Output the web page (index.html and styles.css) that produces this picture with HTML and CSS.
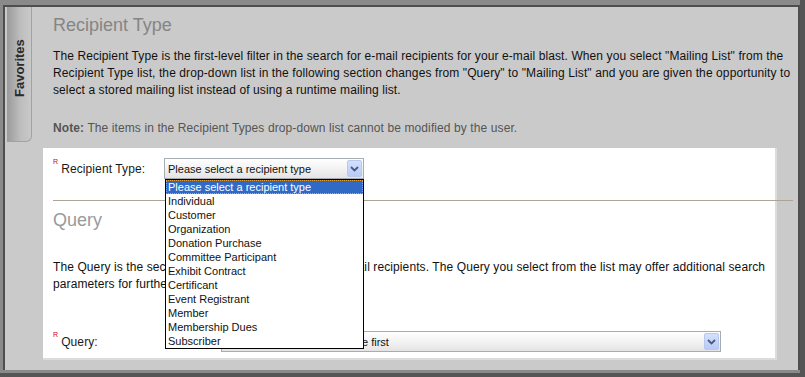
FILE: index.html
```html
<!DOCTYPE html>
<html lang="en">
<head>
    <meta charset="UTF-8">
    <title>Recipient Type</title>
    <link rel="stylesheet" href="styles.css">
</head>
<body>
    <div class="window">
        <div class="panel">
            <div class="tab"><span>Favorites</span></div>

            <div class="content">
                <h2 class="section-title">Recipient Type</h2>
                <p class="help">The Recipient Type is the first-level filter in the search for e-mail recipients for your e-mail blast. When you select "Mailing List" from the Recipient Type list, the drop-down list in the following section changes from "Query" to "Mailing List" and you are given the opportunity to select a stored mailing list instead of using a runtime mailing list.</p>
                <p class="help note"><b>Note:</b> The items in the Recipient Types drop-down list cannot be modified by the user.</p>

                <div class="form-box">
                    <div class="field-row">
                        <label class="field-label"><sup class="req">R</sup>Recipient Type:</label>
                        <div class="select-wrap type-select">
                            <div class="select-box">
                                <span>Please select a recipient type</span>
                                <span class="select-btn"><svg width="9" height="6" viewBox="0 0 9 6"><path d="M1 1 L4.5 4.5 L8 1" fill="none" stroke="#4a5a7e" stroke-width="1.8"/></svg></span>
                            </div>
                            <ul class="dropdown">
                                <li class="selected">Please select a recipient type</li>
                                <li>Individual</li>
                                <li>Customer</li>
                                <li>Organization</li>
                                <li>Donation Purchase</li>
                                <li>Committee Participant</li>
                                <li>Exhibit Contract</li>
                                <li>Certificant</li>
                                <li>Event Registrant</li>
                                <li>Member</li>
                                <li>Membership Dues</li>
                                <li>Subscriber</li>
                            </ul>
                        </div>
                    </div>

                    <hr class="divider">

                    <h2 class="section-title query-title">Query</h2>
                    <p class="help">The Query is the second-level filter in the search for e-mail recipients. The Query you select from the list may offer additional search parameters for further refining the list of recipients.</p>

                    <div class="field-row query-row">
                        <label class="field-label"><sup class="req">R</sup>Query:</label>
                        <div class="select-wrap query-select">
                            <div class="select-box">
                                <span>Please select a recipient type first</span>
                                <span class="select-btn"><svg width="9" height="6" viewBox="0 0 9 6"><path d="M1 1 L4.5 4.5 L8 1" fill="none" stroke="#4a5a7e" stroke-width="1.8"/></svg></span>
                            </div>
                        </div>
                    </div>
                </div>
            </div>
        </div>
    </div>
</body>
</html>
```

FILE: styles.css
```css
body {
    margin: 0;
    font-family: 'Liberation Sans', Arial, sans-serif;
    font-size: 12px;
    color: #111;
    background-color: #555;
}
.window {
    width: 800px;
    height: 373px;
    box-sizing: border-box;
    background-color: #8a8a8a;
    padding: 5px 0 3px 3px;
}
.panel {
    display: flex;
    height: 100%;
    box-sizing: border-box;
    background-color: #cacaca;
    border-top: 2px solid #4e4e4e;
    border-left: 2px solid #4e4e4e;
    border-right: 2px solid #4e4e4e;
    padding-left: 2px;
}
.tab {
    width: 25px;
    height: 135px;
    flex-shrink: 0;
    display: flex;
    justify-content: center;
    padding-top: 32px;
    box-sizing: border-box;
    background: linear-gradient(to right, #9a9a9a, #bdbdbd 55%, #c9c9c9);
    border-right: 1px solid #a2a2a2;
    border-bottom: 1px solid #a2a2a2;
    border-radius: 0 0 6px 0;
}
.tab span {
    writing-mode: vertical-rl;
    transform: rotate(180deg);
    font-weight: bold;
    font-size: 13px;
    color: #2a2a2a;
    height: 58px;
    text-align: center;
}
.content {
    flex: 1;
    margin-left: 11px;
    padding-top: 7px;
}
.section-title {
    margin: 0;
    padding-left: 10px;
    font-size: 18px;
    font-weight: normal;
    line-height: 22px;
    color: #858585;
}
.help {
    margin: 12px 0 0 0;
    padding: 0 6px 0 10px;
    line-height: 17px;
    letter-spacing: 0.1px;
}
.note {
    margin-top: 21px;
    color: #555;
}
.form-box {
    margin: 11px 21px 0 0;
    background-color: #fff;
    border-right: 2px solid #dcdcdc;
    border-bottom: 2px solid #dcdcdc;
    padding: 10px 10px 6px 10px;
}
.field-row {
    display: flex;
    align-items: center;
}
.field-label {
    width: 111px;
    flex-shrink: 0;
    color: #1a1a1a;
    letter-spacing: 0.1px;
}
.req {
    color: #d00;
    font-size: 7px;
    vertical-align: 9px;
    line-height: 0;
    margin-right: 3px;
}
.select-wrap {
    position: relative;
}
.select-box {
    height: 21px;
    box-sizing: border-box;
    display: flex;
    align-items: center;
    justify-content: space-between;
    border: 1px solid #a5acb2;
    background: linear-gradient(to bottom, #fff, #f4f4f4 45%, #e4e4e4);
    padding-left: 3px;
    font-size: 11px;
}
.select-btn {
    width: 15px;
    height: 17px;
    margin-right: 1px;
    box-sizing: border-box;
    border: 1px solid #b8c8ee;
    border-radius: 2px;
    background: linear-gradient(to bottom, #d4e0fd, #b8cbf6);
    display: flex;
    align-items: center;
    justify-content: center;
}
.type-select .select-box {
    width: 200px;
}
.query-row .field-label {
    width: 168px;
}
.query-select .select-box {
    width: 500px;
}
.dropdown {
    position: absolute;
    top: 21px;
    left: 1px;
    width: 199px;
    box-sizing: border-box;
    margin: 0;
    padding: 0;
    list-style: none;
    background-color: #fff;
    border: 1px solid #000;
    font-size: 11px;
    z-index: 5;
}
.dropdown li {
    height: 14px;
    line-height: 14px;
    padding-left: 2px;
    color: #111;
}
.dropdown li.selected {
    background-color: #316ac5;
    color: #fff;
    outline: 1px dotted #e8a33d;
    outline-offset: -1px;
}
.divider {
    margin: 21px -28px 0 0;
    border: 0;
    border-top: 1px solid #aca595;
    height: 0;
}
.query-title {
    margin-top: 8px;
    padding-left: 0;
    color: #9a9a9a;
}
.form-box .help {
    margin: 28px -10px 0 0;
    padding: 0;
}
.query-row {
    margin-top: 38px;
}
```
